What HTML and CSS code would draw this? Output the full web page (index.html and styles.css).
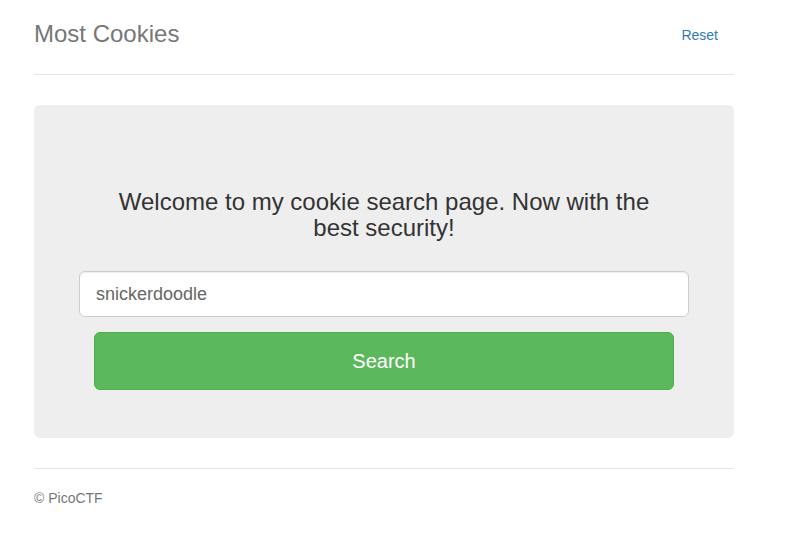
FILE: index.html
```html
<!DOCTYPE html>
<html>
<head>
<meta charset="utf-8">
<title>Most Cookies</title>
<link rel="stylesheet" href="styles.css">
</head>
<body>
<div class="container">
  <div class="header">
    <h3 class="brand">Most Cookies</h3>
    <nav class="nav"><a class="nav-link" href="#">Reset</a></nav>
  </div>
  <div class="jumbotron">
    <h3 class="welcome">Welcome to my cookie search page. Now with the best security!</h3>
    <form class="search-form">
      <input class="search-input" type="text" value="snickerdoodle">
      <button class="search-btn" type="button">Search</button>
    </form>
  </div>
  <footer class="footer">
    <p class="copy">© PicoCTF</p>
  </footer>
</div>
</body>
</html>
```

FILE: styles.css
```css
* { box-sizing: border-box; }
html, body { margin: 0; padding: 0; background: #fff; }
body {
  font-family: "Liberation Sans", Arial, sans-serif;
  font-size: 14px;
  line-height: 20px;
  color: #333;
}
.container {
  width: 700px;
  margin-left: 34px;
  padding-top: 14px;
}
.header {
  display: flex;
  justify-content: space-between;
  align-items: center;
  padding-bottom: 20px;
  border-bottom: 1px solid #e5e5e5;
}
.brand {
  margin: 0;
  font-size: 24px;
  font-weight: normal;
  line-height: 40px;
  color: #777;
}
.nav { display: flex; }
.nav-link {
  display: block;
  padding: 11px 16px 9px 15px;
  color: #337ab7;
  text-decoration: none;
  font-size: 14px;
  line-height: 20px;
}
.jumbotron {
  margin-top: 30px;
  margin-bottom: 30px;
  background: #eee;
  border-radius: 6px;
  padding: 84px 60px 48px;
  text-align: center;
}
.welcome {
  margin: 0 auto;
  font-size: 24px;
  font-weight: normal;
  line-height: 26px;
  color: #333;
  max-width: 560px;
}
.search-form {
  margin-top: 30px;
  display: flex;
  flex-direction: column;
  align-items: center;
  gap: 15px;
}
.search-input {
  display: block;
  width: 610px;
  height: 46px;
  margin: 0 -15px;
  padding: 10px 16px;
  font-family: "Liberation Sans", Arial, sans-serif;
  font-size: 18px;
  color: #666;
  background: #fff;
  border: 1px solid #ccc;
  border-radius: 6px;
  box-shadow: inset 0 1px 1px rgba(0,0,0,.075);
  outline: none;
}
.search-btn {
  display: block;
  width: 580px;
  height: 58px;
  font-family: "Liberation Sans", Arial, sans-serif;
  font-size: 20px;
  color: #fff;
  background: #5cb85c;
  border: 1px solid #4cae4c;
  border-radius: 6px;
  cursor: pointer;
}
.footer {
  border-top: 1px solid #e5e5e5;
  padding-top: 19px;
}
.copy {
  margin: 0 0 10px;
  color: #777;
  font-size: 14px;
  line-height: 20px;
}
```
